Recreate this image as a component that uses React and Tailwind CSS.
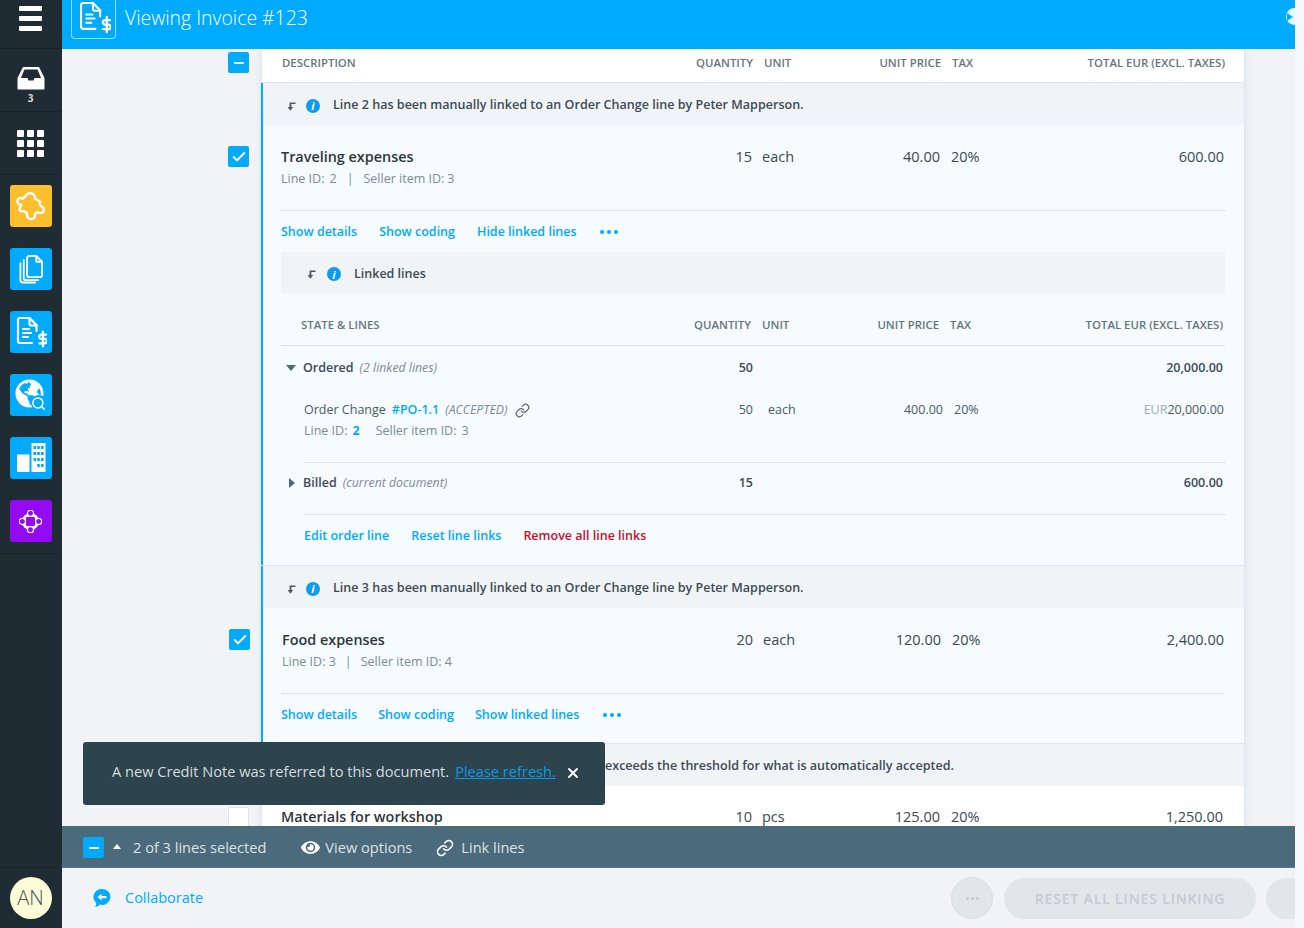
import React from 'react';
import { Check, Link, Minus, Search, X } from 'lucide-react';
import { FaEye, FaGlobeAmericas } from 'react-icons/fa';

const COLS = 'grid grid-cols-[411px_60px_88px_100px_100px_184px] items-center';
const NESTED_COLS = 'grid grid-cols-[412px_60px_88px_100px_100px_182px] items-center';

function DocIcon({ className, weight = 2 }) {
  return (
    <svg viewBox="0 0 32 32" fill="none" stroke="white" strokeWidth={weight} strokeLinecap="round" strokeLinejoin="round" className={className}>
      <path d="M21.5 15V9l-7-7H5a2 2 0 0 0-2 2v21a2 2 0 0 0 2 2h12" />
      <path d="M14.5 2v5.5a2 2 0 0 0 2 2h5" />
      <path d="M8 13h6M8 17h8M8 21h5" />
      <g transform="translate(20.5 15.5) scale(0.62)" strokeWidth="3.6">
        <path d="M12 0v24" />
        <path d="M17 5H9.5a3.5 3.5 0 0 0 0 7h5a3.5 3.5 0 0 1 0 7H6" />
      </g>
    </svg>
  );
}

function PuzzleIcon() {
  return (
    <svg viewBox="48 36 86 86" fill="none" stroke="white" strokeWidth="7" strokeLinejoin="round" className="w-[29px] h-[29px]">
      <path d="M86 40C96 38 106 44 104 56C112 60 118 62 120 66C116 72 120 78 128 82C134 92 128 100 118 98C110 94 106 98 104 102C106 110 100 118 90 116C82 114 80 106 80 98C74 92 66 92 60 92C56 84 60 80 64 74C58 74 52 70 52 62C54 54 62 52 68 56C72 52 76 50 78 46C80 42 82 40 86 40Z" />
    </svg>
  );
}

function FilesIcon() {
  return (
    <svg viewBox="0 0 28 30" fill="none" stroke="white" strokeWidth="1.9" strokeLinejoin="round" strokeLinecap="round" className="w-[27px] h-[30px]">
      <path d="M12.5 1.5h7.5l6 6v14a2 2 0 0 1-2 2H12.5a2 2 0 0 1-2-2v-18a2 2 0 0 1 2-2z" />
      <path d="M20 1.5v6h6" />
      <path d="M7 5.5v19a2 2 0 0 0 2 2h13" />
      <path d="M3.5 9v17.5a2.5 2.5 0 0 0 2.5 2.5h13" />
    </svg>
  );
}

function BuildingIcon() {
  return (
    <svg viewBox="0 0 30 30" fill="white" className="w-[30px] h-[30px]">
      <rect x="1" y="11.5" width="12.5" height="17.5" />
      <rect x="15.5" y="0" width="14" height="29" />
      <g fill="#00aaff">
        <rect x="17.5" y="3" width="2.6" height="3" />
        <rect x="21.2" y="3" width="2.6" height="3" />
        <rect x="25" y="3" width="2.6" height="3" />
        <rect x="17.5" y="9" width="2.6" height="3" />
        <rect x="21.2" y="9" width="2.6" height="3" />
        <rect x="25" y="9" width="2.6" height="3" />
        <rect x="17.5" y="15" width="2.6" height="3" />
        <rect x="21.2" y="15" width="2.6" height="3" />
        <rect x="25" y="15" width="2.6" height="3" />
        <rect x="21.2" y="21" width="2.6" height="3" />
        <rect x="25" y="21" width="2.6" height="3" />
      </g>
    </svg>
  );
}

function HubIcon() {
  return (
    <svg viewBox="0 0 24 24" className="w-[23px] h-[23px]">
      <circle cx="12" cy="12" r="9" fill="white" />
      <rect x="7" y="7" width="10" height="10" rx="2.5" fill="#9209f2" />
      <circle cx="12" cy="3.5" r="3.2" fill="#9209f2" stroke="white" strokeWidth="1.2" />
      <circle cx="12" cy="20.5" r="3.2" fill="#9209f2" stroke="white" strokeWidth="1.2" />
      <circle cx="3.5" cy="12" r="3.2" fill="#9209f2" stroke="white" strokeWidth="1.2" />
      <circle cx="20.5" cy="12" r="3.2" fill="#9209f2" stroke="white" strokeWidth="1.2" />
    </svg>
  );
}

function AppTile({ color, children }) {
  return <div className={`w-[42px] h-[42px] rounded-[3px] flex items-center justify-center ${color}`}>{children}</div>;
}

function Sidebar() {
  return (
    <aside className="w-[62px] shrink-0 h-full bg-[#1f2c33] flex flex-col text-white pr-px">
      <div className="h-[49px] flex flex-col items-center pt-[6px] gap-[5px] border-b border-[#18232a]">
        <div className="w-[23px] h-[5px] rounded-[1px] bg-white" />
        <div className="w-[23px] h-[5px] rounded-[1px] bg-white" />
        <div className="w-[23px] h-[5px] rounded-[1px] bg-white" />
      </div>
      <div className="h-[63px] flex flex-col items-center pt-[17px] border-b border-[#18232a]">
        <svg viewBox="0 0 28 24" className="w-[28px] h-[24px]">
          <path d="M6 1h16l5.5 11v10.5a1 1 0 0 1-1 1h-25a1 1 0 0 1-1-1V12z" fill="white" />
          <path d="M7.5 3.5h13l3.6 8.5h-6.6l-1 2.5h-5l-1-2.5H3.9z" fill="#1f2c33" />
        </svg>
        <span className="mt-[2px] text-[10px] font-bold leading-[12px] text-[#d5dadd]">3</span>
      </div>
      <div className="h-[63px] grid grid-cols-[7px_7px_7px] gap-[3px] justify-center content-center border-b border-[#18232a]">
        {[1, 2, 3, 4, 5, 6, 7, 8, 9].map((n) => (
          <div key={n} className="w-[7px] h-[7px] bg-white rounded-[1px]" />
        ))}
      </div>
      <div className="h-[379px] pt-[10px] flex flex-col items-center gap-[21px] border-b border-[#18232a]">
        <AppTile color="bg-[#fdbf2d]"><PuzzleIcon /></AppTile>
        <AppTile color="bg-[#00aaff]"><FilesIcon /></AppTile>
        <AppTile color="bg-[#00aaff]"><DocIcon className="w-[32px] h-[32px]" weight={2.2} /></AppTile>
        <AppTile color="bg-[#00aaff]">
          <div className="relative w-[32px] h-[32px]">
            <FaGlobeAmericas size={29} color="white" />
            <div className="absolute right-0 bottom-0 w-[16px] h-[16px] rounded-full bg-[#00aaff] flex items-center justify-center">
              <Search size={15} strokeWidth={2.4} color="white" />
            </div>
          </div>
        </AppTile>
        <AppTile color="bg-[#00aaff]"><BuildingIcon /></AppTile>
        <AppTile color="bg-[#9209f2]"><HubIcon /></AppTile>
      </div>
      <div className="mt-auto h-[61px] border-t border-[#18232a] flex items-center justify-center">
        <div className="w-[42px] h-[42px] rounded-full bg-[#fdfdd8] flex items-center justify-center text-[20px] font-light text-[#4a5358]">AN</div>
      </div>
    </aside>
  );
}

function Checkbox({ state, className = '' }) {
  if (state === 'empty') {
    return <div className={`w-[21px] h-[21px] rounded-[2px] bg-white border border-[#dfe4e8] ${className}`} />;
  }
  return (
    <div className={`w-[21px] h-[21px] rounded-[2px] bg-[#00aaff] flex items-center justify-center ${className}`}>
      {state === 'checked' ? <Check size={16} strokeWidth={3} color="white" /> : <Minus size={14} strokeWidth={3.2} color="white" />}
    </div>
  );
}

function HookArrow() {
  return (
    <svg viewBox="0 0 10 10" className="w-[10px] h-[10px]" fill="#4b5a63">
      <path d="M3.6 1.5h5.9v1.6H5.4V7H3.6z" />
      <path d="M1.6 6h5.6L4.4 9.8z" />
    </svg>
  );
}

function InfoDot() {
  return (
    <span className="w-[14px] h-[14px] rounded-full bg-[#0a9cf0] flex items-center justify-center text-white text-[11px] font-bold italic leading-none">i</span>
  );
}

function Notice({ children }) {
  return (
    <div className="h-[42px] bg-[#f1f4f7] flex items-center pl-[23px] pt-[3px] text-[12.55px] font-semibold text-[#3d4a52] border-l-2 border-[#00aaff]">
      <HookArrow />
      <span className="ml-[10px] mr-[13px]"><InfoDot /></span>
      {children}
    </div>
  );
}

function HeaderCols({ first, className = '' }) {
  return (
    <div className={`${className} text-[11.4px] font-semibold uppercase text-[#66757f]`}>
      <span>{first}</span>
      <span className="text-right">Quantity</span>
      <span className="pl-[11px]">Unit</span>
      <span className="text-right">Unit price</span>
      <span className="pl-[11px]">Tax</span>
      <span className="text-right">Total EUR (excl. taxes)</span>
    </div>
  );
}

function LineMain({ title, qty, unit, price, total, totalClass = '' }) {
  return (
    <div className={`${COLS} h-[22px] pb-[2px] text-[14.5px] text-[#3d4a52]`}>
      <span className="font-semibold text-[14.4px] text-[#2d363b]">{title}</span>
      <span className="text-right">{qty}</span>
      <span className="pl-[10px]">{unit}</span>
      <span className="text-right">{price}</span>
      <span className="pl-[11px]">20%</span>
      <span className={`text-right ${totalClass}`}>{total}</span>
    </div>
  );
}

function ActionLink({ children, red }) {
  return <a className={`text-[12.5px] font-semibold ${red ? 'text-[#c5102b]' : 'text-[#00aaff]'}`}>{children}</a>;
}

function Dots({ className = '' }) {
  return (
    <span className={`flex gap-[3px] items-center ${className}`}>
      <span className="w-[4px] h-[4px] rounded-full bg-[#00aaff]" />
      <span className="w-[4px] h-[4px] rounded-full bg-[#00aaff]" />
      <span className="w-[4px] h-[4px] rounded-full bg-[#00aaff]" />
    </span>
  );
}

function Caret({ dir }) {
  return dir === 'down' ? (
    <span className="w-0 h-0 border-x-[5px] border-x-transparent border-t-[6px] border-t-[#4b6a7b]" />
  ) : (
    <span className="w-0 h-0 border-y-[5px] border-y-transparent border-l-[6px] border-l-[#4b6a7b]" />
  );
}

function LinkedLines() {
  return (
    <>
      <div className="h-[41px] bg-[#f1f4f7] flex items-center pl-[25px] pt-[3px] text-[12.5px] font-semibold text-[#3d4a52]">
        <HookArrow />
        <span className="ml-[11px] mr-[13px]"><InfoDot /></span>
        Linked lines
      </div>
      <div className="h-[53px] border-b border-[#d9e0e5] pt-[23px] pl-[20px]">
        <HeaderCols first="State &amp; lines" className="grid grid-cols-[392px_58px_88px_100px_100px_184px] items-center" />
      </div>
      <div className={`${NESTED_COLS} h-[42px] pt-[2px] text-[12.5px] font-semibold text-[#3d4a52]`}>
        <span className="flex items-center">
          <span className="ml-[5px] mr-[7px] flex"><Caret dir="down" /></span>
          Ordered
          <span className="ml-[6px] italic font-normal text-[12.3px] text-[#7d8b94]">(2 linked lines)</span>
        </span>
        <span className="text-right">50</span>
        <span />
        <span />
        <span />
        <span className="text-right">20,000.00</span>
      </div>
      <div className="mt-[11px] pt-[1px] grid grid-cols-[412px_60px_88px_100px_100px_183px] items-center h-[21px] text-[12.5px] text-[#4b5a63]">
        <span className="pl-[23px] flex items-center">
          Order Change
          <span className="ml-[6px] font-semibold text-[#00aaff]">#PO-1.1</span>
          <span className="ml-[6px] italic text-[12.3px] text-[#7d8b94]">(ACCEPTED)</span>
          <Link size={15} className="ml-[7px] text-[#5d6d77]" />
        </span>
        <span className="text-right">50</span>
        <span className="pl-[15px]">each</span>
        <span className="text-right translate-x-[2px]">400.00</span>
        <span className="pl-[13px]">20%</span>
        <span className="text-right"><span className="text-[#a0acb3]">EUR</span>20,000.00</span>
      </div>
      <div className="h-[21px] pl-[23px] pt-[1px] flex items-center text-[12.5px] text-[#7d8b94]">
        Line ID:
        <span className="ml-[5px] font-bold text-[#00aaff]">2</span>
        <span className="ml-[16px]">Seller item ID:</span>
        <span className="ml-[5px]">3</span>
      </div>
      <div className="mt-[21px] ml-[23px] border-t border-dotted border-[#cfd7dc]" />
      <div className={`${NESTED_COLS} h-[40px] text-[12.5px] font-semibold text-[#3d4a52]`}>
        <span className="flex items-center">
          <span className="ml-[8px] mr-[8px] flex"><Caret dir="right" /></span>
          Billed
          <span className="ml-[6px] italic font-normal text-[12.3px] text-[#7d8b94]">(current document)</span>
        </span>
        <span className="text-right">15</span>
        <span />
        <span />
        <span />
        <span className="text-right">600.00</span>
      </div>
      <div className="mt-[11px] ml-[23px] border-t border-dotted border-[#cfd7dc]" />
      <div className="h-[41px] pl-[23px] pt-[2px] flex items-center gap-[22px]">
        <ActionLink>Edit order line</ActionLink>
        <ActionLink>Reset line links</ActionLink>
        <ActionLink red>Remove all line links</ActionLink>
      </div>
    </>
  );
}

function Content() {
  return (
    <div className="relative flex-1 min-h-0 overflow-hidden bg-[#f1f3f6]">
      <div className="flex">
        {/* left gutter with the row checkboxes */}
        <div className="w-[199px] shrink-0 pl-[166px]">
          <Checkbox state="partial" className="mt-[3px]" />
          <Checkbox state="checked" className="mt-[73px]" />
          <Checkbox state="checked" className="mt-[462px] ml-px" />
          <Checkbox state="empty" className="mt-[157px]" />
        </div>

        <div className="w-[984px] shrink-0 border-r border-[#dfe5ea] shadow-[0_0_6px_rgba(120,140,155,0.15)]">
          <div className="h-[33px] bg-white pl-[20px] pb-[6px] flex items-center border-l border-[#e3e8ec]">
            <HeaderCols first="Description" className={COLS} />
          </div>
          <div className="h-px bg-[#e1e6ea]" />

          <Notice>Line 2 has been manually linked to an Order Change line by Peter Mapperson.</Notice>
          <div className="bg-[#f5fbff] border-l-2 border-[#00aaff] pl-[18px] pr-[19px] pt-[21px] h-[440px]">
            <LineMain title="Traveling expenses" qty="15" unit="each" price="40.00" total="600.00" />
            <div className="h-[22px] pt-[1px] flex items-center text-[12.5px] text-[#7d8b94]">
              Line ID:<span className="ml-[5px]">2</span>
              <span className="mx-[10px]">|</span>
              Seller item ID:<span className="ml-[3px]">3</span>
            </div>
            <div className="mt-[20px] border-t border-dotted border-[#cfd7dc]" />
            <div className="h-[41px] pt-[1px] flex items-center gap-[22px]">
              <ActionLink>Show details</ActionLink>
              <ActionLink>Show coding</ActionLink>
              <ActionLink>Hide linked lines</ActionLink>
              <Dots className="ml-px" />
            </div>
            <LinkedLines />
          </div>
          <div className="h-px bg-[#dfe5ea]" />

          <Notice>Line 3 has been manually linked to an Order Change line by Peter Mapperson.</Notice>
          <div className="bg-[#f5fbff] border-l-2 border-[#00aaff] pl-[19px] pr-[20px] pt-[21px] h-[135px]">
            <LineMain title="Food expenses" qty="20" unit="each" price="120.00" total="2,400.00" totalClass="pr-px" />
            <div className="h-[22px] pt-[1px] flex items-center text-[12.5px] text-[#7d8b94]">
              Line ID: 3
              <span className="mx-[9px]">|</span>
              Seller item ID: 4
            </div>
            <div className="mt-[20px] border-t border-dotted border-[#cfd7dc]" />
            <div className="h-[41px] pt-[1px] -ml-px flex items-center gap-[21px]">
              <ActionLink>Show details</ActionLink>
              <ActionLink>Show coding</ActionLink>
              <ActionLink>Show linked lines</ActionLink>
              <Dots className="ml-[3px]" />
            </div>
          </div>
          <div className="h-px bg-[#dfe5ea]" />

          {/* start of this notice sits under the toast */}
          <div className="h-[42px] bg-[#f1f4f7] flex items-center pl-[343px] pt-[3px] text-[12.55px] font-semibold text-[#3d4a52] border-l border-[#e3e8ec]">
            exceeds the threshold for what is automatically accepted.
          </div>
          <div className="bg-white border-l border-[#e3e8ec] pl-[19px] pr-[21px] pt-[20px] h-[60px]">
            <LineMain title="Materials for workshop" qty="10" unit="pcs" price="125.00" total="1,250.00" totalClass="pr-px" />
          </div>
        </div>
      </div>

      <div className="absolute left-[21px] top-[693px] w-[522px] h-[63px] pb-[4px] rounded-[3px] bg-[#2d434d] flex items-center pl-[29px] text-[14.6px] text-[#d5dde0]">
        A new Credit Note was referred to this document.
        <a className="ml-[6px] text-[#0a9ae0] underline">Please refresh.</a>
        <X size={16} strokeWidth={2.8} color="white" className="ml-[9px] mt-[3px]" />
      </div>
    </div>
  );
}

function SelectionBar() {
  return (
    <div className="h-[42px] shrink-0 bg-[#4b6a7b] border-b border-[#5c7a8a] flex items-center pl-[21px] pt-[2px] text-[14.6px] text-[#dce3e7]">
      <Checkbox state="partial" />
      <span className="ml-[9px] mb-[2px] w-0 h-0 border-x-[4px] border-x-transparent border-b-[5px] border-b-white" />
      <span className="ml-[12px]">2 of 3 lines selected</span>
      <FaEye size={19} color="white" className="ml-[35px]" />
      <span className="ml-[5px]">View options</span>
      <Link size={18} color="white" className="ml-[24px]" />
      <span className="ml-[7px]">Link lines</span>
    </div>
  );
}

function Footer() {
  return (
    <div className="h-[60px] shrink-0 bg-[#f1f3f6] flex items-center pl-[30px] pr-0 overflow-hidden">
      <svg viewBox="0 0 20 20" className="w-[20px] h-[20px]">
        <path d="M10.5 1a8 8 0 1 1-2.6 15.6C6.6 18 4.5 19 3 19c1-1 1.3-2.6 1-4.3A8 8 0 0 1 10.5 1z" fill="#00aaff" />
        <path d="M5.5 9l4-3.2V8h5v2.2h-5v2.2z" fill="white" />
      </svg>
      <a className="ml-[13px] text-[14.5px] text-[#00aaff]">Collaborate</a>
      <div className="ml-auto flex items-center shrink-0 gap-[10px] -mr-[40px]">
        <div className="w-[42px] h-[42px] -ml-px mr-px rounded-full bg-[#e3e6e9] border border-[#dcdfe3] flex items-center justify-center gap-[2px]">
          <span className="w-[3px] h-[3px] rounded-full bg-[#c5cbd0]" />
          <span className="w-[3px] h-[3px] rounded-full bg-[#c5cbd0]" />
          <span className="w-[3px] h-[3px] rounded-full bg-[#c5cbd0]" />
        </div>
        <div className="w-[252px] h-[41px] rounded-full bg-[#e3e6e9] flex items-center justify-center text-[14px] font-semibold tracking-[0.85px] text-[#c5cbd0]">RESET ALL LINES LINKING</div>
        <div className="w-[69px] h-[41px] rounded-full bg-[#e3e6e9]" />
      </div>
    </div>
  );
}

export default function App() {
  return (
    <div className="relative w-[1304px] h-[928px] overflow-hidden flex bg-[#f7f8fa] [font-family:'Open_Sans',sans-serif]">
      <Sidebar />
      <main className="w-[1233px] shrink-0 h-full flex flex-col">
        <header className="h-[49px] shrink-0 bg-[#00aaff] flex items-start relative">
          <div className="ml-[9px] w-[45px] h-[39px] border border-t-0 border-white/60 rounded-b-[4px] pl-[6px] pt-px">
            <DocIcon className="w-[33px] h-[33px]" />
          </div>
          <h1 className="ml-[9px] mt-[3px] text-[19.4px] font-light text-white">Viewing Invoice #123</h1>
          <div className="absolute right-0 top-[8px] w-[9px] h-[17px] overflow-hidden">
            <div className="w-[17px] h-[17px] rounded-full bg-white/90 flex items-center">
              <span className="ml-[1px] w-0 h-0 border-y-[4px] border-y-transparent border-l-[6px] border-l-[#00aaff]" />
            </div>
          </div>
        </header>
        <Content />
        <SelectionBar />
        <Footer />
      </main>
    </div>
  );
}
